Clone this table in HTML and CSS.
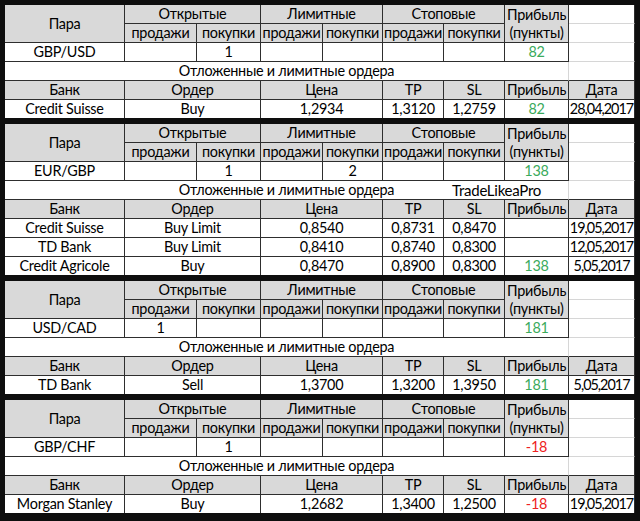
FILE: index.html
```html
<!DOCTYPE html>
<html lang="ru">
<head>
<meta charset="utf-8">
<title>Ордера</title>
<link rel="stylesheet" href="styles.css">
</head>
<body>
<div class="sheet">

  <table class="block">
    <colgroup><col class="c1"><col class="c2"><col class="c3"><col class="c4"><col class="c5"><col class="c6"><col class="c7"><col class="c8"><col class="c9"></colgroup>
    <tr><td class="h" rowspan="2">Пара</td><td class="h" colspan="2">Открытые</td><td class="h" colspan="2">Лимитные</td><td class="h" colspan="2">Стоповые</td><td class="h" rowspan="2">Прибыль<br>(пункты)</td><td class="blank"></td></tr>
    <tr><td class="h">продажи</td><td class="h">покупки</td><td class="h">продажи</td><td class="h">покупки</td><td class="h">продажи</td><td class="h">покупки</td><td class="blank"></td></tr>
    <tr><td>GBP/USD</td><td></td><td>1</td><td></td><td></td><td></td><td></td><td class="pos">82</td><td class="blank"></td></tr>
    <tr><td class="sub" colspan="8">Отложенные и лимитные ордера</td><td class="blank last"></td></tr>
    <tr><td class="h">Банк</td><td class="h" colspan="2">Ордер</td><td class="h" colspan="2">Цена</td><td class="h">TP</td><td class="h">SL</td><td class="h">Прибыль</td><td class="h">Дата</td></tr>
    <tr><td>Credit Suisse</td><td colspan="2">Buy</td><td colspan="2">1,2934</td><td>1,3120</td><td>1,2759</td><td class="pos">82</td><td class="d">28,04,2017</td></tr>
  </table>

  <table class="block">
    <colgroup><col class="c1"><col class="c2"><col class="c3"><col class="c4"><col class="c5"><col class="c6"><col class="c7"><col class="c8"><col class="c9"></colgroup>
    <tr><td class="h" rowspan="2">Пара</td><td class="h" colspan="2">Открытые</td><td class="h" colspan="2">Лимитные</td><td class="h" colspan="2">Стоповые</td><td class="h" rowspan="2">Прибыль<br>(пункты)</td><td class="blank"></td></tr>
    <tr><td class="h">продажи</td><td class="h">покупки</td><td class="h">продажи</td><td class="h">покупки</td><td class="h">продажи</td><td class="h">покупки</td><td class="blank"></td></tr>
    <tr><td>EUR/GBP</td><td></td><td>1</td><td></td><td>2</td><td></td><td></td><td class="pos">138</td><td class="blank"></td></tr>
    <tr><td class="sub" colspan="8">Отложенные и лимитные ордера<span class="mark">TradeLikeaPro</span></td><td class="blank last"></td></tr>
    <tr><td class="h">Банк</td><td class="h" colspan="2">Ордер</td><td class="h" colspan="2">Цена</td><td class="h">TP</td><td class="h">SL</td><td class="h">Прибыль</td><td class="h">Дата</td></tr>
    <tr><td>Credit Suisse</td><td colspan="2">Buy Limit</td><td colspan="2">0,8540</td><td>0,8731</td><td>0,8470</td><td></td><td class="d">19,05,2017</td></tr>
    <tr><td>TD Bank</td><td colspan="2">Buy Limit</td><td colspan="2">0,8410</td><td>0,8740</td><td>0,8300</td><td></td><td class="d">12,05,2017</td></tr>
    <tr><td>Credit Agricole</td><td colspan="2">Buy</td><td colspan="2">0,8470</td><td>0,8900</td><td>0,8300</td><td class="pos">138</td><td class="d">5,05,2017</td></tr>
  </table>

  <table class="block">
    <colgroup><col class="c1"><col class="c2"><col class="c3"><col class="c4"><col class="c5"><col class="c6"><col class="c7"><col class="c8"><col class="c9"></colgroup>
    <tr><td class="h" rowspan="2">Пара</td><td class="h" colspan="2">Открытые</td><td class="h" colspan="2">Лимитные</td><td class="h" colspan="2">Стоповые</td><td class="h" rowspan="2">Прибыль<br>(пункты)</td><td class="blank"></td></tr>
    <tr><td class="h">продажи</td><td class="h">покупки</td><td class="h">продажи</td><td class="h">покупки</td><td class="h">продажи</td><td class="h">покупки</td><td class="blank"></td></tr>
    <tr><td>USD/CAD</td><td>1</td><td></td><td></td><td></td><td></td><td></td><td class="pos">181</td><td class="blank"></td></tr>
    <tr><td class="sub" colspan="8">Отложенные и лимитные ордера</td><td class="blank last"></td></tr>
    <tr><td class="h">Банк</td><td class="h" colspan="2">Ордер</td><td class="h" colspan="2">Цена</td><td class="h">TP</td><td class="h">SL</td><td class="h">Прибыль</td><td class="h">Дата</td></tr>
    <tr><td>TD Bank</td><td colspan="2">Sell</td><td colspan="2">1,3700</td><td>1,3200</td><td>1,3950</td><td class="pos">181</td><td class="d">5,05,2017</td></tr>
  </table>

  <table class="block">
    <colgroup><col class="c1"><col class="c2"><col class="c3"><col class="c4"><col class="c5"><col class="c6"><col class="c7"><col class="c8"><col class="c9"></colgroup>
    <tr><td class="h" rowspan="2">Пара</td><td class="h" colspan="2">Открытые</td><td class="h" colspan="2">Лимитные</td><td class="h" colspan="2">Стоповые</td><td class="h" rowspan="2">Прибыль<br>(пункты)</td><td class="blank"></td></tr>
    <tr><td class="h">продажи</td><td class="h">покупки</td><td class="h">продажи</td><td class="h">покупки</td><td class="h">продажи</td><td class="h">покупки</td><td class="blank"></td></tr>
    <tr><td>GBP/CHF</td><td></td><td>1</td><td></td><td></td><td></td><td></td><td class="neg">-18</td><td class="blank"></td></tr>
    <tr><td class="sub" colspan="8">Отложенные и лимитные ордера</td><td class="blank last"></td></tr>
    <tr><td class="h">Банк</td><td class="h" colspan="2">Ордер</td><td class="h" colspan="2">Цена</td><td class="h">TP</td><td class="h">SL</td><td class="h">Прибыль</td><td class="h">Дата</td></tr>
    <tr><td>Morgan Stanley</td><td colspan="2">Buy</td><td colspan="2">1,2682</td><td>1,3400</td><td>1,2500</td><td class="neg">-18</td><td class="d">19,05,2017</td></tr>
  </table>

</div>
</body>
</html>
```

FILE: styles.css
```css
html, body {
  margin: 0;
  padding: 0;
  background: #0e0e0e;
}

.sheet {
  width: 640px;
  height: 521px;
  box-sizing: border-box;
  padding: 5px 5px 0 5px;
  display: flex;
  flex-direction: column;
  gap: 6px;
  background: #0e0e0e;
  font-family: Lato, "Open Sans", "Liberation Sans", sans-serif;
  font-size: 14.4px;
  letter-spacing: -0.25px;
  color: #000000;
}

.block {
  width: 630px;
  table-layout: fixed;
  border-collapse: separate;
  border-spacing: 0;
  background: #ffffff;
}

.c1 { width: 120px; }
.c2 { width: 72px; }
.c3 { width: 64px; }
.c4 { width: 62px; }
.c5 { width: 60px; }
.c6 { width: 61px; }
.c7 { width: 61px; }
.c8 { width: 64px; }
.c9 { width: 66px; }

.block td {
  padding: 0;
  height: 18px;
  line-height: 18px;
  text-align: center;
  white-space: nowrap;
  overflow: visible;
  border-right: 1px solid #2e2e2e;
  border-bottom: 1px solid #2e2e2e;
  background: #ffffff;
}

.block tr:last-child td {
  border-bottom: none;
}

.block td.h {
  background: #d9d9d9;
}

.block td.blank {
  border-bottom-color: #d6d6d6;
}

.block td.sub {
  position: relative;
  border-right-color: #d6d6d6;
}

.block td.blank.last {
  border-bottom-color: #2e2e2e;
}

.block td.d {
  letter-spacing: -1px;
}

.pos {
  color: #3aaa5c;
}

.neg {
  color: #ee2222;
}

.mark {
  position: absolute;
  left: 447px;
  top: 0;
  font-size: 15px;
}
```
